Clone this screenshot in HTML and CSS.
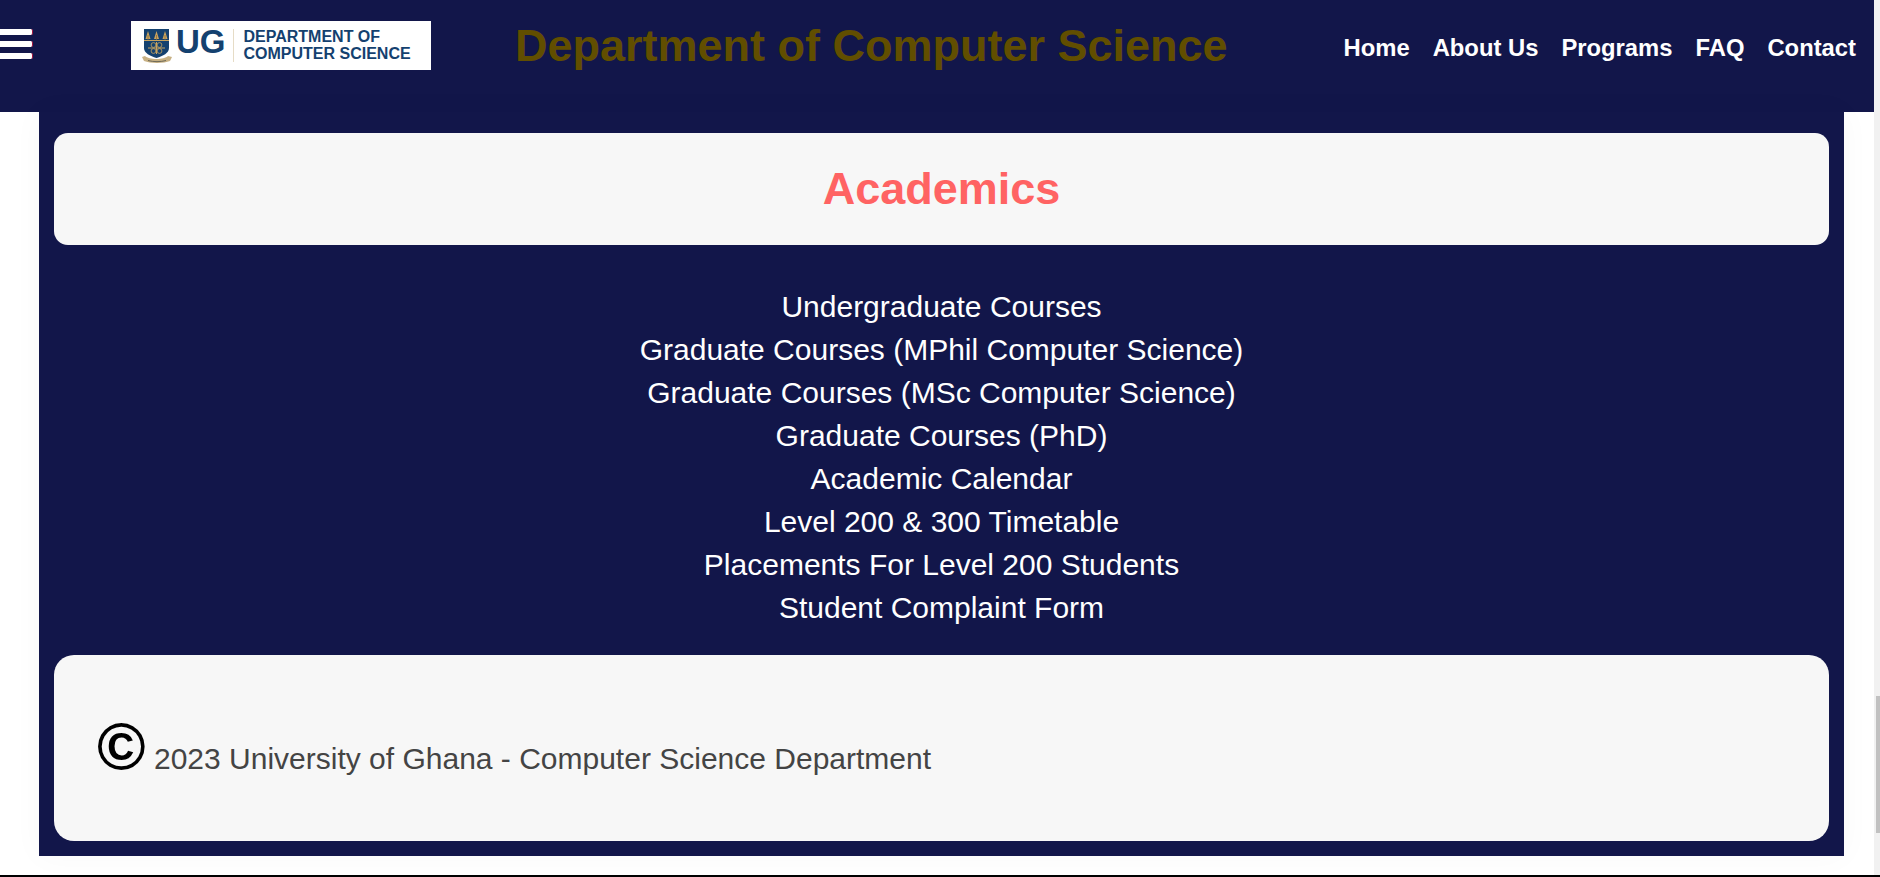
FILE: index.html
```html
<!DOCTYPE html>
<html lang="en">

<head>
    <meta charset="UTF-8">
    <meta name="viewport" content="width=device-width, initial-scale=1.0">
    <title>Academics</title>
    <link rel="stylesheet" href="styles.css">
</head>

<body>

    <div class="page">
        <!-- Top bar -->
        <header class="topbar">
            <div class="menu-icon"><span></span><span></span><span></span></div>
            <div class="logo">
                <svg class="crest" width="30" height="35" viewBox="0 0 30 35">
                    <path d="M2 1H27V20C27 25 21 28 14.500 30C8 28 2 25 2 20Z" fill="#14416f" />
                    <path d="M2 12.500H27" stroke="#c9a45f" stroke-width="1" />
                    <path d="M6 3L8.500 11H3.500ZM14.500 3L17 11H12ZM23 3L25.500 11H20.500Z" fill="#c9a45f" />
                    <path d="M6 7V12M14.500 7V12M23 7V12" stroke="#8a6f3c" stroke-width=".8" />
                    <path d="M6 20H23M14.500 14V26" stroke="#c9a45f" stroke-width="1" />
                    <circle cx="11.500" cy="17" r="2.400" fill="none" stroke="#c9a45f" stroke-width=".8" />
                    <circle cx="17.500" cy="17" r="2.400" fill="none" stroke="#c9a45f" stroke-width=".8" />
                    <circle cx="11.500" cy="23" r="2.400" fill="none" stroke="#c9a45f" stroke-width=".8" />
                    <circle cx="17.500" cy="23" r="2.400" fill="none" stroke="#c9a45f" stroke-width=".8" />
                    <path d="M0 29L3 28C7 32 22 32 26 28L30 29L28 33C22 35.500 8 35.500 2 33Z" fill="#c8b184" />
                    <path d="M6 32.500C11 34 19 34 24 32.500" stroke="#6e6a58" stroke-width="1" fill="none" />
                </svg>
                <span class="logo-ug">UG</span>
                <span class="logo-line"></span>
                <span class="logo-name">DEPARTMENT OF<br>COMPUTER SCIENCE</span>
            </div>
            <h1 class="site-title">Department of Computer Science</h1>
            <nav class="main-nav">
                <a href="#">Home</a>
                <a href="#">About Us</a>
                <a href="#">Programs</a>
                <a href="#">FAQ</a>
                <a href="#">Contact</a>
            </nav>
        </header>

        <!-- Main content -->
        <main class="content">
            <section class="card heading-card">
                <h2>Academics</h2>
            </section>

            <ul class="links">
                <li><a href="#">Undergraduate Courses</a></li>
                <li><a href="#">Graduate Courses (MPhil Computer Science)</a></li>
                <li><a href="#">Graduate Courses (MSc Computer Science)</a></li>
                <li><a href="#">Graduate Courses (PhD)</a></li>
                <li><a href="#">Academic Calendar</a></li>
                <li><a href="#">Level 200 &amp; 300 Timetable</a></li>
                <li><a href="#">Placements For Level 200 Students</a></li>
                <li><a href="#">Student Complaint Form</a></li>
            </ul>

            <footer class="card footer-card">
                <p><span class="copy">©</span> 2023 University of Ghana - Computer Science Department</p>
            </footer>
        </main>
    </div>

    <div class="scrollbar"><div class="scrollbar-thumb"></div></div>

</body>

</html>
```

FILE: styles.css
```css
html,
body {
    height: 100%;
}

body {
    font-family: "Liberation Sans", Arial, sans-serif;
    margin: 0;
    background-color: #fff;
    border-bottom: 2px solid #000;
    box-sizing: border-box;
    display: flex;
    overflow: hidden;
}

.page {
    flex: 1;
    min-width: 0;
}

/* Top bar */
.topbar {
    height: 112px;
    background-color: #12164a;
    display: flex;
    align-items: flex-start;
}

.menu-icon {
    width: 33px;
    margin-top: 29px;
    display: flex;
    flex-direction: column;
    gap: 6px;
}

.menu-icon span {
    height: 6px;
    background-color: #fff;
    border-right: 1px solid #a3123f;
    border-radius: 0 2px 2px 0;
}

.logo {
    width: 300px;
    height: 49px;
    margin: 21px 0 0 98px;
    background-color: #fff;
    display: flex;
    align-items: center;
    padding-left: 11px;
    box-sizing: border-box;
}

.crest {
    flex: none;
}

.logo-ug {
    color: #14416f;
    font-size: 33px;
    line-height: 38px;
    font-weight: bold;
    margin: -8px 0 0 4px;
}

.logo-line {
    width: 1px;
    height: 33px;
    background-color: #e6dcc6;
    margin: 0 10px 0 7px;
}

.logo-name {
    color: #14416f;
    font-size: 16px;
    line-height: 17px;
    font-weight: bold;
    white-space: nowrap;
    margin-top: -2px;
}

.site-title {
    margin: 21px 0 0 84px;
    font-size: 45px;
    line-height: 49px;
    color: #614e00;
    white-space: nowrap;
}

.main-nav {
    margin: 34px 0 0 auto;
    padding-right: 18px;
    display: flex;
    gap: 23px;
}

.main-nav a {
    color: #fff;
    font-size: 23.8px;
    line-height: 28px;
    font-weight: bold;
    text-decoration: none;
}

/* Content */
.content {
    margin: 0 30px 0 39px;
    padding: 21px 15px 15px;
    background-color: #12164a;
    box-shadow: 0 0 30px rgba(0, 0, 0, 0.03);
}

.card {
    background-color: #f7f7f7;
}

.heading-card {
    height: 112px;
    border-radius: 14px;
    display: flex;
    align-items: center;
    justify-content: center;
}

.heading-card h2 {
    margin: 0;
    color: #ff6363;
    font-size: 45px;
}

.links {
    list-style: none;
    margin: 0;
    padding: 40px 0 26px;
    text-align: center;
}

.links li {
    font-size: 30px;
    line-height: 43px;
}

.links a {
    color: #fff;
    text-decoration: none;
}

.footer-card {
    height: 186px;
    border-radius: 20px;
    display: flex;
    align-items: center;
    padding-left: 43px;
    box-sizing: border-box;
}

.footer-card p {
    margin: 0 0 4px;
    color: #444;
    font-size: 30px;
}

.copy {
    color: #000;
    font-size: 66px;
    line-height: 60px;
    font-weight: bold;
}

/* Scrollbar from the screenshot */
.scrollbar {
    width: 6px;
    background-color: #f1f1f1;
    display: flex;
    justify-content: flex-end;
}

.scrollbar-thumb {
    width: 4px;
    height: 137px;
    margin-top: 696px;
    background-color: #c1c1c1;
}
```
